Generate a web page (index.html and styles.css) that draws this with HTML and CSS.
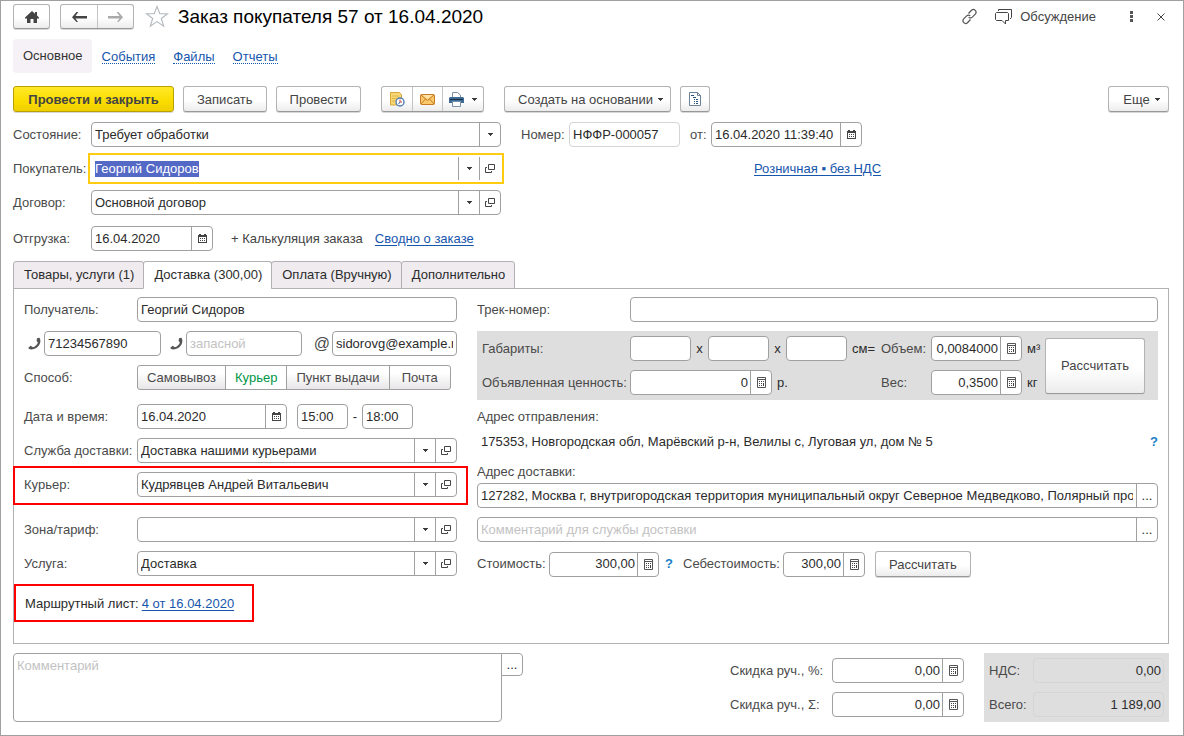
FILE: index.html
```html
<!DOCTYPE html>
<html lang="ru">
<head>
<meta charset="utf-8">
<title>Заказ покупателя 57 от 16.04.2020</title>
<link rel="stylesheet" href="styles.css">
</head>
<body>
<svg class="sprite" aria-hidden="true">
  <symbol id="i-down" viewBox="0 0 5 3"><path d="M0 0h5v1H4v1H3v1H2V2H1V1H0z" fill="#3c3c3c"/></symbol>
  <symbol id="i-open" viewBox="0 0 10 9"><path d="M3.500.5h6v5h-6zM2 3.500H.5v5h6V7" fill="none" stroke="#444"/></symbol>
  <symbol id="i-cal" viewBox="0 0 9 9"><path d="M1 0h2v1h3V0h2v1h1v8H0V1h1z" fill="#444"/><path d="M1 3h7v5H1z" fill="#fff"/><path d="M2 4h1v1H2zm2 0h1v1H4zm2 0h1v1H6zM2 6h1v1H2zm2 0h1v1H4zm2 0h1v1H6z" fill="#444"/></symbol>
  <symbol id="i-calc" viewBox="0 0 9 11"><path d="M.5.5h8v10h-8zM1 2.500h7" fill="none" stroke="#555"/><path d="M2 4h1v1H2zm2 0h1v1H4zm2 0h1v1H6zM2 6h1v1H2zm2 0h1v1H4zm2 0h1v3H6zM2 8h1v1H2zm2 0h1v1H4z" fill="#444"/></symbol>
  <symbol id="i-phone" viewBox="0 0 13 13"><path d="M9 1.200 11.500.8C12.600 2.500 12.800 5 11.600 7.300 10.200 10.200 6.500 12.600 3.200 12.500 1.800 12.400.6 11.700.3 10.800L2.700 8.800 4.900 10.300C7 9.700 9 8 9.900 5.500L8.600 4z" fill="#555"/></symbol>
</svg>

<main class="window">
  <header class="header">
    <button class="btn home" aria-label="Домой"><svg width="14" height="12" viewBox="0 0 14 12"><path d="M7 0 10 2.700V1h2v3.500L14 6.500V7.500h-2V12H8.500V8h-3v4H2V7.500H0V6.500z" fill="#444"/></svg></button>
    <div class="group history">
      <button aria-label="Назад"><svg width="15" height="10" viewBox="0 0 15 10"><path d="M6 0v.5L3.500 4H15v2.500H3.500L6 10H4.500L0 5.200 4.500 0z" fill="#444"/></svg></button>
      <button aria-label="Вперед"><svg width="15" height="10" viewBox="0 0 15 10"><path d="M9 0v.5L11.500 4H0v2.500h11.500L9 10h1.500L15 5.200 10.500 0z" fill="#aaa"/></svg></button>
    </div>
    <button class="plain star" aria-label="В избранное"><svg width="24" height="23" viewBox="0 0 24 23"><path d="m12 1.500 2.800 7.300h7.700l-6.200 4.700 2.400 7.700L12 16.600l-6.700 4.600 2.400-7.700L1.500 8.800h7.700z" fill="#fff" stroke="#b3b8bd" stroke-width="1.100"/></svg></button>
    <h1>Заказ покупателя 57 от 16.04.2020</h1>
    <div class="header-tools">
      <button class="plain link-btn" aria-label="Ссылка"><svg width="17" height="17" viewBox="0 0 17 17" fill="none" stroke="#555" stroke-width="1.200"><path d="M7.500 5.500l3-3.200c2.600-2.200 6 1 3.800 3.800l-3 3c-1 .9-2.600.9-3.600.1M9.500 11.500l-3 3.200c-2.600 2.200-6-1-3.800-3.800l3-3c1-.9 2.600-.9 3.600-.1"/></svg></button>
      <button class="plain talk"><svg width="17" height="16" viewBox="0 0 17 16" fill="none" stroke="#444"><path d="M3.500 2V.5h13v8L15 10M1.500 3.500h11l1 1v7h-3v3.500L7 11.500H1.500l-1-1v-6z"/></svg><span>Обсуждение</span></button>
      <button class="plain dots" aria-label="Меню"><svg width="3" height="11" viewBox="0 0 3 11" fill="#555"><path d="M0 0h3v3H0zM0 4h3v3H0zM0 8h3v3H0z"/></svg></button>
      <button class="plain" aria-label="Закрыть"><svg width="8" height="8" viewBox="0 0 8 8"><path d="m.5.5 7 7m0-7-7 7" stroke="#444"/></svg></button>
    </div>
  </header>

  <nav class="sections">
    <a class="current" href="#main">Основное</a>
    <a href="#events"><span>События</span></a>
    <a href="#files"><span>Файлы</span></a>
    <a href="#reports"><span>Отчеты</span></a>
  </nav>

  <div class="toolbar">
    <button class="btn primary">Провести и закрыть</button>
    <button class="btn">Записать</button>
    <button class="btn">Провести</button>
    <div class="group tools">
      <button aria-label="Напоминание"><svg width="16" height="16" viewBox="0 0 16 16"><path d="M1.500 1.500h9l2 2.500v10h-11z" fill="#f7d774" stroke="#d9a83c"/><path d="M3 5h7M3 7.500h5M3 10h3" stroke="#e2b64d"/><circle cx="11" cy="11" r="4" fill="#fff" stroke="#4f7eb5" stroke-width="1.400"/><path d="M11 8.500V11h2" fill="none" stroke="#d0453c"/><path d="M11 11l-1.500 2" stroke="#3b6ea8"/></svg></button>
      <button aria-label="Письмо"><svg width="15" height="11" viewBox="0 0 15 11"><rect x=".5" y=".5" width="14" height="10" rx="1" fill="#f9c96c" stroke="#c87a24"/><path d="m1 1 6.500 5.500L14 1M1 10l4.500-5M14 10 9.500 5" fill="none" stroke="#c87a24"/><path d="M2.500 1h10l-5 4z" fill="#fde3a8"/></svg></button>
      <button class="print" aria-label="Печать"><svg width="15" height="15" viewBox="0 0 15 15"><path d="M3.500 5V.5h5L11.500 3v2" fill="#fff" stroke="#7c92a8"/><path d="M1 5h13l1 1v5H0V6z" fill="#3e6c96"/><path d="M1 7h13v1H1z" fill="#16304a"/><path d="M3.500 9.500h8v5h-8z" fill="#fff" stroke="#7c92a8"/></svg><svg class="down" width="5" height="3"><use href="#i-down"/></svg></button>
    </div>
    <button class="btn menu create">Создать на основании<svg class="down" width="5" height="3"><use href="#i-down"/></svg></button>
    <button class="btn report" aria-label="Отчет"><svg width="12" height="14" viewBox="0 0 12 14"><path d="M.5.5h8l3 3v10H.5z" fill="#fff" stroke="#6d8296"/><path d="M2 3.500h3M4 5.500h3M5 7.500h1m1 0h2M5 9.500h1m1 0h2M5 11.500h1m1 0h2" stroke="#27527c"/><path d="M8.500.5v3h3" fill="none" stroke="#6d8296"/></svg></button>
    <button class="btn menu more">Еще<svg class="down" width="5" height="3"><use href="#i-down"/></svg></button>
  </div>

  <section class="order">
    <div class="row">
      <label for="state">Состояние:</label>
      <div class="field wide has-select"><select id="state"><option>Требует обработки</option></select><span class="cell"><svg width="5" height="3"><use href="#i-down"/></svg></span></div>
      <label class="number" for="number">Номер:</label>
      <div class="field readonly code"><input id="number" value="НФФР-000057" readonly></div>
      <label class="from" for="stamp">от:</label>
      <div class="field stamp"><input id="stamp" value="16.04.2020 11:39:40"><button class="cell" aria-label="Календарь"><svg width="9" height="9"><use href="#i-cal"/></svg></button></div>
    </div>
    <div class="row">
      <label for="buyer">Покупатель:</label>
      <div class="field wide active"><input id="buyer" value="Георгий Сидоров" autofocus><button class="cell" aria-label="Выбрать"><svg width="5" height="3"><use href="#i-down"/></svg></button><button class="cell" aria-label="Открыть"><svg width="10" height="9"><use href="#i-open"/></svg></button></div>
      <a class="price-kind" href="#price">Розничная ▪ без НДС</a>
    </div>
    <div class="row">
      <label for="contract">Договор:</label>
      <div class="field wide"><input id="contract" value="Основной договор"><button class="cell" aria-label="Выбрать"><svg width="5" height="3"><use href="#i-down"/></svg></button><button class="cell" aria-label="Открыть"><svg width="10" height="9"><use href="#i-open"/></svg></button></div>
    </div>
    <div class="row shipping">
      <label for="ship">Отгрузка:</label>
      <div class="field date"><input id="ship" value="16.04.2020"><button class="cell" aria-label="Календарь"><svg width="9" height="9"><use href="#i-cal"/></svg></button></div>
      <button class="plain calc-link">+ Калькуляция заказа</button>
      <a href="#summary">Сводно о заказе</a>
    </div>
  </section>

  <div class="tabs" role="tablist">
    <button role="tab">Товары, услуги (1)</button>
    <button role="tab" class="selected" aria-selected="true">Доставка (300,00)</button>
    <button role="tab">Оплата (Вручную)</button>
    <button role="tab">Дополнительно</button>
  </div>

  <section class="panel">
    <div class="recipient">
      <div class="row">
        <label for="rcpt">Получатель:</label>
        <div class="field"><input id="rcpt" value="Георгий Сидоров"></div>
      </div>
      <div class="contacts">
        <label for="phone1" aria-label="Телефон"><svg width="13" height="13"><use href="#i-phone"/></svg></label>
        <div class="field"><input id="phone1" value="71234567890"></div>
        <label for="phone2" aria-label="Запасной телефон"><svg width="13" height="13"><use href="#i-phone"/></svg></label>
        <div class="field"><input id="phone2" placeholder="запасной"></div>
        <label class="at" for="email">@</label>
        <div class="field"><input id="email" value="sidorovg@example.ru"></div>
      </div>
      <div class="row">
        <span class="label" id="way">Способ:</span>
        <div class="switch" role="radiogroup" aria-labelledby="way">
          <label><input type="radio" name="way">Самовывоз</label>
          <label><input type="radio" name="way" checked>Курьер</label>
          <label><input type="radio" name="way">Пункт выдачи</label>
          <label><input type="radio" name="way">Почта</label>
        </div>
      </div>
      <div class="row spaced">
        <label for="day">Дата и время:</label>
        <div class="when">
          <div class="field day"><input id="day" value="16.04.2020"><button class="cell" aria-label="Календарь"><svg width="9" height="9"><use href="#i-cal"/></svg></button></div>
          <div class="field time"><input aria-label="Время с" value="15:00"></div>
          <span class="dash">-</span>
          <div class="field time"><input aria-label="Время по" value="18:00"></div>
        </div>
      </div>
      <div class="row">
        <label for="service">Служба доставки:</label>
        <div class="field"><input id="service" value="Доставка нашими курьерами"><button class="cell" aria-label="Выбрать"><svg width="5" height="3"><use href="#i-down"/></svg></button><button class="cell" aria-label="Открыть"><svg width="10" height="9"><use href="#i-open"/></svg></button></div>
      </div>
      <div class="row marked">
        <label for="courier">Курьер:</label>
        <div class="field"><input id="courier" value="Кудрявцев Андрей Витальевич"><button class="cell" aria-label="Выбрать"><svg width="5" height="3"><use href="#i-down"/></svg></button><button class="cell" aria-label="Открыть"><svg width="10" height="9"><use href="#i-open"/></svg></button></div>
      </div>
      <div class="row zone">
        <label for="zone">Зона/тариф:</label>
        <div class="field"><input id="zone"><button class="cell" aria-label="Выбрать"><svg width="5" height="3"><use href="#i-down"/></svg></button><button class="cell" aria-label="Открыть"><svg width="10" height="9"><use href="#i-open"/></svg></button></div>
      </div>
      <div class="row">
        <label for="item">Услуга:</label>
        <div class="field"><input id="item" value="Доставка"><button class="cell" aria-label="Выбрать"><svg width="5" height="3"><use href="#i-down"/></svg></button><button class="cell" aria-label="Открыть"><svg width="10" height="9"><use href="#i-open"/></svg></button></div>
      </div>
      <div class="route"><span>Маршрутный лист:</span><a href="#route">4 от 16.04.2020</a></div>
    </div>

    <div class="parcel">
      <div class="row">
        <label for="track">Трек-номер:</label>
        <div class="field"><input id="track"></div>
      </div>
      <div class="sizes">
        <label for="len">Габариты:</label>
        <div class="dims">
          <div class="field"><input id="len"></div><span class="times">x</span>
          <div class="field"><input aria-label="Ширина"></div><span class="times">x</span>
          <div class="field"><input aria-label="Высота"></div><span class="unit">см=</span>
        </div>
        <label for="volume">Объем:</label>
        <div class="field num"><input id="volume" value="0,0084000"><button class="cell" aria-label="Калькулятор"><svg width="9" height="11"><use href="#i-calc"/></svg></button></div>
        <span class="unit">м³</span>
        <button class="btn big">Рассчитать</button>
        <label for="declared">Объявленная ценность:</label>
        <div class="dims">
          <div class="field num declared"><input id="declared" value="0"><button class="cell" aria-label="Калькулятор"><svg width="9" height="11"><use href="#i-calc"/></svg></button></div>
          <span class="unit">р.</span>
        </div>
        <label for="weight">Вес:</label>
        <div class="field num"><input id="weight" value="0,3500"><button class="cell" aria-label="Калькулятор"><svg width="9" height="11"><use href="#i-calc"/></svg></button></div>
        <span class="unit">кг</span>
      </div>
      <span class="label">Адрес отправления:</span>
      <div class="origin"><span>175353, Новгородская обл, Марёвский р-н, Велилы с, Луговая ул, дом № 5</span><button class="plain help" aria-label="Справка">?</button></div>
      <label class="dest-label" for="dest">Адрес доставки:</label>
      <div class="field"><input id="dest" value="127282, Москва г, внутригородская территория муниципальный округ Северное Медведково, Полярный проезд"><button class="cell">...</button></div>
      <div class="field note"><input aria-label="Комментарий для службы доставки" placeholder="Комментарий для службы доставки"><button class="cell">...</button></div>
      <div class="costs">
        <label for="cost">Стоимость:</label>
        <div class="field num cost"><input id="cost" value="300,00"><button class="cell" aria-label="Калькулятор"><svg width="9" height="11"><use href="#i-calc"/></svg></button></div>
        <button class="plain help" aria-label="Справка">?</button>
        <label class="self" for="self">Себестоимость:</label>
        <div class="field num selfcost"><input id="self" value="300,00"><button class="cell" aria-label="Калькулятор"><svg width="9" height="11"><use href="#i-calc"/></svg></button></div>
        <button class="btn">Рассчитать</button>
      </div>
    </div>
  </section>

  <footer class="footer">
    <div class="comment"><textarea aria-label="Комментарий" placeholder="Комментарий"></textarea><button class="cell">...</button></div>
    <div class="discounts">
      <label for="dp">Скидка руч., %:</label>
      <div class="field num"><input id="dp" value="0,00"><button class="cell" aria-label="Калькулятор"><svg width="9" height="11"><use href="#i-calc"/></svg></button></div>
      <label for="ds">Скидка руч., Σ:</label>
      <div class="field num"><input id="ds" value="0,00"><button class="cell" aria-label="Калькулятор"><svg width="9" height="11"><use href="#i-calc"/></svg></button></div>
    </div>
    <div class="totals">
      <label for="vat">НДС:</label>
      <div class="field num total"><input id="vat" value="0,00" readonly></div>
      <label for="sum">Всего:</label>
      <div class="field num total"><input id="sum" value="1 189,00" readonly></div>
    </div>
  </footer>
</main>
<script src="app.js"></script>
</body>
</html>
```

FILE: styles.css
```css
* { box-sizing: border-box; }

body {
  margin: 0;
  background: #fff;
  color: #2b2b2b;
  font: 13px/16px "Liberation Sans", Arial, sans-serif;
}

.sprite { position: absolute; width: 0; height: 0; }

svg { display: block; flex: none; }

button, input, select, textarea {
  margin: 0;
  padding: 0;
  border: 0;
  background: none;
  color: inherit;
  font: inherit;
}

a { color: #1756ad; text-underline-offset: 2px; }

label, .label { color: #4a4a4a; white-space: nowrap; }

.window {
  min-height: 100vh;
  padding: 3px 14px 12px 12px;
  border: 1px solid #a0a0a0;
}

/* Buttons */

.btn, .group {
  display: flex;
  align-items: center;
  justify-content: center;
  height: 26px;
  border: 1px solid #b3b3b3;
  border-bottom-color: #989898;
  border-radius: 3px;
  background: linear-gradient(#fff 55%, #ececec);
  box-shadow: 0 1px 0 #d8d8d8;
  color: #444;
}

.btn { padding: 1px 13px 0; }

.group button {
  display: flex;
  align-items: center;
  justify-content: center;
  align-self: stretch;
  width: 30px;
}

.group button + button { border-left: 1px solid #c4c4c4; }

.plain { display: flex; align-items: center; }

.help { color: #1a7fc8; font-weight: bold; }

/* Header */

.header { display: flex; align-items: center; height: 25px; }

.home { width: 37px; height: 25px; padding: 0; }

.history { height: 25px; margin-left: 10px; }

.history button { width: 36px; }

.star { margin-left: 11px; }

h1 {
  margin: 0 0 0 9px;
  color: #000;
  font-size: 19px;
  font-weight: normal;
  line-height: 24px;
  white-space: nowrap;
}

.header-tools {
  display: flex;
  align-items: center;
  margin-left: auto;
  padding-right: 4px;
  color: #444;
}

.talk { gap: 8px; margin-left: 17px; }

.dots { margin: 0 24px 0 34px; }

/* Sections */

.sections { display: flex; gap: 18px; height: 34px; margin-top: 10px; }

.sections a {
  display: flex;
  align-items: center;
  text-decoration: none;
}

.sections a span { height: 15px; border-bottom: 1px dotted #1756ad; line-height: 15px; }

.sections .current {
  margin-right: -8px;
  padding: 0 9px 0 10px;
  border-radius: 4px;
  background: #f5f1f6;
  color: #333;
}

/* Toolbar */

.toolbar { display: flex; gap: 9px; margin-top: 13px; }

.primary {
  min-width: 161px;
  border-color: #b8a000;
  background: linear-gradient(#ffe928, #fbdc00 60%, #efcf00);
  color: #444;
  font-weight: bold;
}

.tools { margin: 0 11px; }

.tools .print { gap: 8px; width: 41px; }

.menu { gap: 5px; padding-right: 7px; }

.report { width: 30px; padding: 0; }

.more { min-width: 61px; margin-left: auto; }

/* Fields */

.field {
  display: flex;
  height: 25px;
  min-width: 0;
  border: 1px solid #a0a0a0;
  border-radius: 4px;
  background: #fff;
}

.field input, .field select {
  flex: 1;
  width: 0;
  min-width: 0;
  padding: 0 3px;
  outline: none;
}

.cell {
  display: flex;
  flex: none;
  align-items: center;
  justify-content: center;
  width: 21px;
  border-left: 1px solid #a0a0a0;
}

.num input { text-align: right; padding-right: 2px; }

.has-select { display: grid; grid-template-columns: 1fr 21px; }

.has-select select {
  grid-area: 1 / 1 / 2 / 3;
  width: auto;
  appearance: none;
}

.has-select .cell { grid-area: 1 / 2; pointer-events: none; }

.readonly { border-color: #d4d4d4; }

.active {
  border-color: transparent;
  border-radius: 0;
  outline: 2px solid #fc1;
  outline-offset: 1px;
}

.active input::selection { background: #5468c6; color: #fff; }

input::placeholder, textarea::placeholder { color: #c2c2c2; opacity: 1; }

.row { display: flex; align-items: center; }

/* Order header */

.order { display: grid; gap: 9px; margin-top: 10px; }

.order .row > label:first-child { width: 78px; }

.wide { width: 410px; }

.order .number { width: 48px; margin-left: 20px; }

.code { width: 111px; }

.from { width: 21px; margin-left: 10px; }

.stamp { width: 151px; }

.price-kind { margin-left: 253px; }

.shipping { margin-top: 2px; }

.date { width: 122px; }

.calc-link { margin: 0 12px 0 18px; color: #444; }

/* Tabs */

.tabs { display: flex; margin-top: 10px; }

.tabs button {
  height: 28px;
  margin: 0 0 -1px -1px;
  padding: 0 9px 0 10px;
  border: 1px solid #b2b0b2;
  border-radius: 3px 3px 0 0;
  background: #efebef;
}

.tabs button:first-child { margin-left: 0; }

.tabs .selected { border-bottom-color: #fff; background: #fff; }

.panel {
  display: grid;
  grid-template-columns: 433px minmax(0, 1fr);
  gap: 20px;
  padding: 8px 10px 21px;
  border: 1px solid #b2b0b2;
}

.recipient, .parcel { display: flex; flex-direction: column; gap: 9px; }

.recipient .row > label, .recipient .label { width: 113px; }

.recipient .row > .field { flex: 1; }

.contacts {
  display: grid;
  grid-template-columns: 20px 117px 25px 116px 30px 125px;
  align-items: center;
}

.contacts label { justify-self: end; padding-right: 3px; }

.contacts .at { padding-right: 2px; font-size: 16px; }

.switch {
  display: flex;
  height: 25px;
  border: 1px solid #a0a0a0;
  border-radius: 3px;
  background: linear-gradient(#fff 30%, #e8e6e8);
}

.switch label { display: flex; align-items: center; padding: 0 9px; }

.switch label:last-child { padding: 0 12px; }

.switch label + label { border-left: 1px solid #a0a0a0; }

.switch input { position: absolute; opacity: 0; }

.switch label:has(:checked) { background: #fff; color: #009646; }

.spaced { margin-top: 5px; }

.when { display: flex; align-items: center; }

.day { width: 150px; margin-right: 10px; }

.time { width: 51px; }

.dash { width: 14px; text-align: center; }

.marked { position: relative; }

.marked::after {
  content: "";
  position: absolute;
  inset: -6px -11px -8px;
  border: 2px solid #f00;
  pointer-events: none;
}

.zone { margin-top: 11px; }

.route {
  display: flex;
  align-items: center;
  align-self: flex-start;
  gap: 3px;
  height: 38px;
  margin: -1px 0 0 -10px;
  padding: 1px 18px 0 9px;
  border: 2px solid #f00;
}

/* Parcel */

.parcel .row label { width: 153px; }

.parcel .row .field { flex: 1; }

.sizes {
  display: grid;
  grid-template-columns: 148px 251px 50px 91px 23px 100px;
  grid-template-rows: 25px 25px;
  row-gap: 9px;
  align-items: center;
  padding: 5px;
  background: #dedede;
}

.dims { display: flex; align-items: center; }

.dims .field { width: 61px; }

.dims .declared { width: 142px; }

.times { width: 17px; text-align: center; }

.unit { padding-left: 5px; }

.big { grid-area: 1 / 6 / 3 / 7; height: 56px; padding: 0; }

.origin { display: flex; justify-content: space-between; padding-left: 4px; margin-bottom: 5px; }

.dest-label { margin-bottom: -6px; }

.costs { display: flex; align-items: center; }

.costs > label:first-child { width: 72px; }

.cost { width: 110px; }

.costs .help { width: 24px; padding-left: 6px; }

.costs .self { width: 100px; }

.selfcost { width: 82px; }

.costs .btn { margin-left: 10px; }

/* Footer */

.footer { display: flex; margin-top: 9px; }

.comment { display: flex; align-items: flex-start; width: 510px; height: 69px; }

.comment textarea {
  flex: 1;
  height: 69px;
  padding: 4px 3px;
  border: 1px solid #a0a0a0;
  border-radius: 4px 0 4px 4px;
  resize: none;
}

.comment .cell {
  width: 22px;
  height: 23px;
  margin-left: -1px;
  border: 1px solid #a0a0a0;
  border-radius: 0 4px 4px 0;
}

.discounts, .totals { display: grid; row-gap: 9px; align-items: center; padding: 5px 0; }

.discounts { grid-template-columns: 102px 132px; margin-left: auto; }

.totals {
  grid-template-columns: 44px 131px;
  margin-left: 20px;
  padding: 5px;
  background: #dedede;
}

.total { border-color: #d5d5d5; background: none; }
```

FILE: app.js
```js
const buyer = document.getElementById("buyer");
buyer.focus();
buyer.select();
```
